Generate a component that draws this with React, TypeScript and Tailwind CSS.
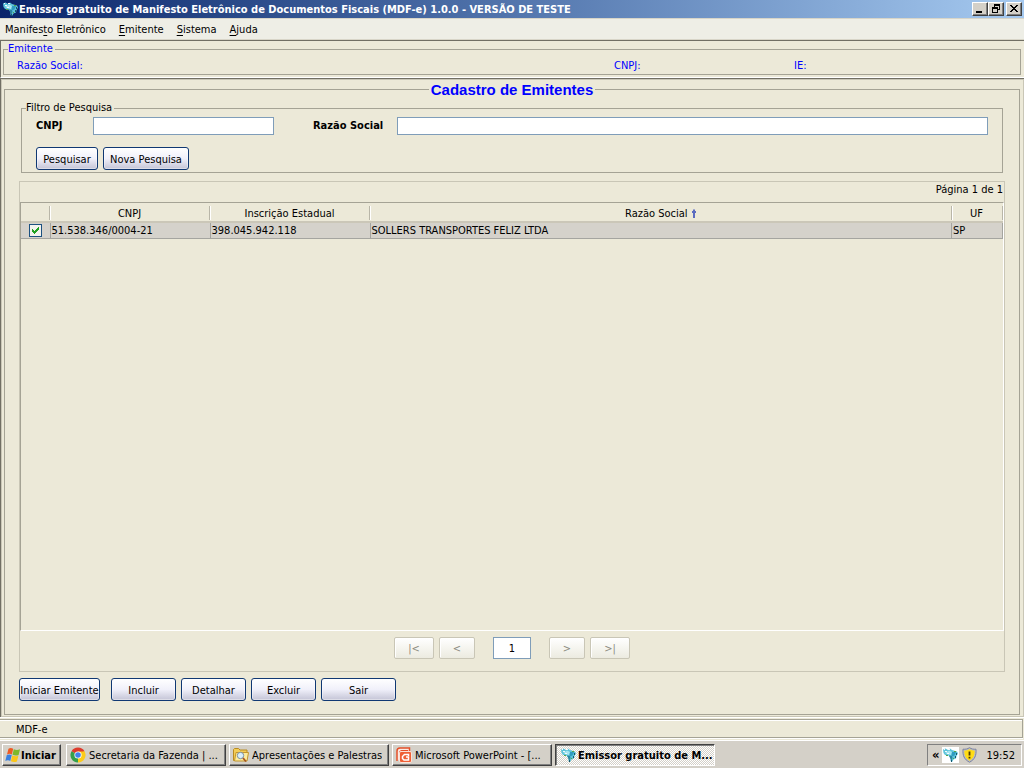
import type { ReactNode } from "react";

function CrystalIcon() {
  return (
    <svg width="17" height="16" viewBox="0 0 17 16" aria-hidden="true">
      <path d="M1 2.500L3.500 1.500 6 3 8 1.500 10 3l5 1.500 1 2-1.500 2.500-.5 2.500-2.500 1-1.500 2.500-1.500-1V11L6.500 8.500 3 8 1.500 6z" fill="#5dc3da" />
      <path d="M3 6l4-2.500 3 1.500-1 3-2.500-.5z" fill="#a6e6f2" />
      <path d="M10 5l4 0-1.500 3.500-3 1z" fill="#2f9cc0" />
      <path d="M7 8.500l3 .5.5 2-1 2.500L8.500 12z" fill="#2a86a0" />
      <g shapeRendering="crispEdges">
        <path d="M2 2h1v1H2zM6 2h2v1H6zM3 4h2v1H3zM5 6h2v1H5z" fill="#f4fbfd" />
        <path d="M14 6h1v2h-1zM13 9h1v2h-1zM9 13h1v2H9z" fill="#14566c" />
        <path d="M12 4h2v1h-2zM4 8h2v1H4zM11 11h1v1h-1z" fill="#58a648" />
      </g>
    </svg>
  );
}

function FlagIcon() {
  return (
    <svg width="16" height="16" viewBox="0 0 16 16" aria-hidden="true">
      <path d="M3.500 1.700C5 .8 6.500.8 8.200 1.700L6.900 7.400C5.300 6.600 3.800 6.600 2 7.400z" fill="#ee5a24" />
      <path d="M8.800 2.200c1.900 1 4 1 6.200.1L13.600 8c-2.100.8-4 .7-6.100-.2z" fill="#7db82b" />
      <path d="M1.800 8.100c1.700-.8 3.300-.8 4.900 0L5.300 13.900c-1.500-.9-3.200-.9-5 0z" fill="#3a80e0" />
      <path d="M7.300 8.600c2 .9 3.900 1 6.100.2l-1.500 5.700c-2.100.8-4 .7-6-.2z" fill="#fbc618" />
    </svg>
  );
}

function ChromeIcon() {
  return (
    <svg width="16" height="16" viewBox="0 0 16 16" aria-hidden="true">
      <path d="M8 8L1.500 4.250A7.500 7.500 0 0 1 14.500 4.250z" fill="#de3b2d" />
      <path d="M8 8l6.500-3.750A7.500 7.500 0 0 1 8 15.500z" fill="#fccb1b" />
      <path d="M8 8V15.500A7.500 7.500 0 0 1 1.500 4.250z" fill="#35a04a" />
      <path d="M8 4.500h6.600L11 9.800 8 15.500z" fill="#fccb1b" />
      <circle cx="8" cy="8" r="3.600" fill="#ffffff" />
      <circle cx="8" cy="8" r="2.800" fill="#4482e8" />
    </svg>
  );
}

function FolderIcon() {
  return (
    <svg width="16" height="16" viewBox="0 0 16 16" aria-hidden="true">
      <path d="M.5 2.500L1.500 1.500h4l1.500 1.500H14v2.500H3.500V13.500H.5z" fill="#f3cd58" stroke="#b98b22" />
      <path d="M1.500 14L3 5.500h12.500l-1.500 8.500z" fill="#fdeb9c" stroke="#c3962c" />
      <circle cx="7.500" cy="8.500" r="3.200" fill="#d9effb" stroke="#7c8fa1" />
      <path d="M10 11l3 3.500" stroke="#a65520" strokeWidth="1.800" />
    </svg>
  );
}

function PowerPointIcon() {
  return (
    <svg width="16" height="16" viewBox="0 0 16 16" aria-hidden="true">
      <path d="M1 14V4C1 2 2 1 4 1h9.500v3" fill="#fbe9e2" stroke="#e4502a" strokeWidth="1.500" />
      <path d="M3.500 14V6c0-2 1-2.500 2.500-2.500H12" fill="none" stroke="#e4502a" />
      <rect x="3.500" y="4.500" width="12" height="11" rx="1.500" fill="#ef6036" stroke="#fbe1d6" />
      <path d="M12.500 9V7.500H8.500L6.500 9.500v2l1.500 1.500h4.500V10H10" fill="none" stroke="#fff" strokeWidth="1.500" />
    </svg>
  );
}

function ShieldIcon() {
  return (
    <svg width="15" height="16" viewBox="0 0 15 16" aria-hidden="true">
      <path d="M7.500.7C9.500 2 11.500 2.400 14 2.200c.5 6.300-1.200 10.300-6.500 13C2.200 12.500.5 8.500 1 2.200 3.500 2.400 5.500 2 7.500.7z" fill="#b9bdc8" stroke="#7d83a0" />
      <path d="M7.500 2.200c1.700.9 3.400 1.200 5.200 1.200.1 4.800-1.200 7.900-5.200 10.300-4-2.400-5.300-5.500-5.200-10.300 1.800 0 3.500-.3 5.200-1.200z" fill="#ffdc14" />
      <path d="M7.500 4.500v4M7.500 9.700v1.800" stroke="#4b3900" strokeWidth="1.800" />
    </svg>
  );
}

const uiFont = "font-['DejaVu_Sans_Condensed','DejaVu_Sans',sans-serif]";

function CaptionButton({ label, children }: { label: string; children: ReactNode }) {
  return (
    <button
      type="button"
      aria-label={label}
      className="flex h-3.5 w-4 items-center justify-center border border-t-white border-r-[#404040] border-b-[#404040] border-l-white bg-[#d4d0c8] shadow-[inset_-1px_-1px_#808080]"
    >
      <svg width="12" height="10" viewBox="0 0 12 10" shapeRendering="crispEdges" aria-hidden="true">
        {children}
      </svg>
    </button>
  );
}

function ActionButton({ children, width }: { children: ReactNode; width: string }) {
  return (
    <button
      type="button"
      className={`${width} h-[23px] rounded-[3px] border border-[#103873] bg-linear-to-b from-white via-[#f0f0fa] to-[#c4c4d6] pt-0.5 text-center whitespace-nowrap shadow-[inset_0_0_0_1px_#ffffff66]`}
    >
      {children}
    </button>
  );
}

function PageButton({ label, width, children }: { label: string; width: string; children: ReactNode }) {
  return (
    <button
      type="button"
      disabled
      aria-label={label}
      className={`${width} h-[22px] rounded-[2px] border border-[#c9c6b6] bg-linear-to-b from-white to-[#ecebe0] pt-0.5 text-[#8c8b80] shadow-[inset_1px_1px_#fff]`}
    >
      {children}
    </button>
  );
}

function MenuItem({ before = "", hot, after }: { before?: string; hot: string; after: string }) {
  return (
    <button type="button" className="whitespace-nowrap">
      {before}
      <span className="underline underline-offset-2">{hot}</span>
      {after}
    </button>
  );
}

function TaskButton({ icon, children }: { icon: ReactNode; children: ReactNode }) {
  return (
    <button
      type="button"
      className="flex h-[22px] w-40 items-center gap-[3px] border border-t-white border-r-[#404040] border-b-[#404040] border-l-white bg-[#d4d0c8] px-[3px] shadow-[inset_-1px_-1px_#808080]"
    >
      <span className="shrink-0">{icon}</span>
      <span className="truncate pt-px">{children}</span>
    </button>
  );
}

const columns = [
  { name: "CNPJ", width: "w-40" },
  { name: "Inscrição Estadual", width: "w-40" },
  { name: "Razão Social", width: "", sorted: true },
  { name: "UF", width: "w-[51px]" },
];

const rows = [["51.538.346/0004-21", "398.045.942.118", "SOLLERS TRANSPORTES FELIZ LTDA", "SP"]];

export default function App() {
  return (
    <div className={`${uiFont} flex min-h-screen flex-col bg-[#ece9d8] text-[11px] leading-[14px] text-black`}>
      <header className="flex h-[18px] items-center bg-linear-to-r from-[#0a246a] to-[#a6caf0] pr-0.5 pl-0.5 text-white">
        <CrystalIcon />
        <h1 className="flex-1 truncate pt-px font-bold">
          Emissor gratuito de Manifesto Eletrônico de Documentos Fiscais (MDF-e) 1.0.0 - VERSÃO DE TESTE
        </h1>
        <div className="flex">
          <CaptionButton label="Minimizar">
            <path d="M2 7h6v2H2z" fill="#000" />
          </CaptionButton>
          <CaptionButton label="Restaurar">
            <path d="M4 0h6v6H8V5h1V2H5v1H4zM2 3h6v6H2zM3 5v3h4V5z" fill="#000" fillRule="evenodd" />
          </CaptionButton>
          <div className="ml-0.5">
            <CaptionButton label="Fechar">
              <path d="M2 1h2v1h1v1h2V2h1V1h2v1H9v1H8v1H7v1h1v1h1v1h1v1H8V7H7V6H5v1H4v1H2V7h1V6h1V5h1V4H4V3H3V2H2z" fill="#000" />
            </CaptionButton>
          </div>
        </div>
      </header>

      <nav className="flex h-[22px] items-center gap-[13px] border-t border-b border-[#d8d5c8] bg-[#eeeee6] px-[5px] pt-px">
        <MenuItem before="Manifes" hot="t" after="o Eletrônico" />
        <MenuItem hot="E" after="mitente" />
        <MenuItem hot="S" after="istema" />
        <MenuItem hot="A" after="juda" />
      </nav>

      <section className="border-t border-b border-l border-[#716f64] border-b-white pt-px pr-[3px] pb-0.5 pl-0.5">
        <fieldset className="border border-[#a5a395] px-1 text-[#0000ff]">
          <legend className="pr-0.5">Emitente</legend>
          <div className="grid grid-cols-[1fr_180px_222px] pt-[3px] pb-px pl-[9px]">
            <span>Razão Social:</span>
            <span>CNPJ:</span>
            <span>IE:</span>
          </div>
        </fieldset>
      </section>

      <main className="flex flex-1 flex-col border-t border-l border-[#716f64]">
        <div className="flex flex-1 flex-col border border-[#c9c6b6] pt-[9px] pr-[3px] pb-px pl-0.5">
          <section className="flex flex-1 flex-col border border-[#a5a395] px-3.5 pb-[13px]">
            <h2 className="mx-auto -mt-[9px] bg-[#ece9d8] px-0.5 font-['Liberation_Sans',sans-serif] text-[15px] leading-[18px] font-bold text-[#0000ff]">
              Cadastro de Emitentes
            </h2>

            <fieldset className="mx-0.5 mt-0.5 border border-[#a5a395] px-1 pb-0.5">
              <legend className="pr-0.5">Filtro de Pesquisa</legend>
              <form className="px-2.5" onSubmit={(event) => event.preventDefault()}>
                <div className="flex items-center pt-0.5 font-bold">
                  <label htmlFor="cnpj" className="w-[57px]">
                    CNPJ
                  </label>
                  <input id="cnpj" className="h-[18px] w-[181px] border border-[#7f9db9] bg-white px-1 font-normal outline-none" />
                  <label htmlFor="razao" className="ml-[39px] w-[84px]">
                    Razão Social
                  </label>
                  <input id="razao" className="h-[18px] min-w-0 flex-1 border border-[#7f9db9] bg-white px-1 font-normal outline-none" />
                </div>
                <div className="mt-3 flex gap-[5px]">
                  <ActionButton width="w-[62px]">Pesquisar</ActionButton>
                  <ActionButton width="w-[86px]">Nova Pesquisa</ActionButton>
                </div>
              </form>
            </fieldset>

            <section className="mt-2 flex flex-1 flex-col border border-[#c9c6b6]">
              <p className="h-5 pt-px pr-px text-right">Página 1 de 1</p>
              <div className="flex-1 border-t border-r border-b border-l border-t-[#a5a395] border-r-white border-b-white border-l-[#a5a395]">
                <table className="w-full table-fixed border-collapse">
                  <thead>
                    <tr className="h-[19px] border-b-2 border-[#cbc7b8]">
                      <th scope="col" aria-label="Selecionar" className="w-[29px] p-0 pt-0.5">
                        <div className="h-3.5 border-r border-[#b9b6a8] shadow-[1px_0_#fff]" />
                      </th>
                      {columns.map((column) => (
                        <th key={column.name} scope="col" className={`${column.width} p-0 pt-0.5 font-normal`}>
                          <div className="flex h-3.5 items-center justify-center gap-1 border-r border-[#b9b6a8] pt-px shadow-[1px_0_#fff]">
                            {column.name}
                            {column.sorted && (
                              <svg width="4" height="9" viewBox="0 0 4 9" shapeRendering="crispEdges" aria-hidden="true">
                                <path d="M1 0h2v1H1z" fill="#a4abd0" />
                                <path d="M1 1h2v1h1v2H3v5H1V4H0V2h1z" fill="#5c6cc0" />
                              </svg>
                            )}
                          </div>
                        </th>
                      ))}
                    </tr>
                  </thead>
                  <tbody>
                    {rows.map((row) => (
                      <tr key={row[0]} className="h-4 border-b border-[#a5a5a0] bg-[#d5d2cb]">
                        <td className="border-r border-[#a5a5a0] p-0">
                          <label className="relative mx-auto block size-[13px]">
                            <input
                              type="checkbox"
                              defaultChecked
                              aria-label="Selecionar emitente"
                              className="peer block size-[13px] appearance-none border border-[#1c5180] bg-[#f3f3ee]"
                            />
                            <svg
                              width="13"
                              height="13"
                              viewBox="0 0 13 13"
                              shapeRendering="crispEdges"
                              aria-hidden="true"
                              className="pointer-events-none absolute inset-0 hidden peer-checked:block"
                            >
                              <path d="M3 5h1v1h1v1h1V6h1V5h1V4h1V3h1v3H9v1H8v1H7v1H6v1H5V9H4V8H3z" fill="#21a121" />
                            </svg>
                          </label>
                        </td>
                        {row.map((cell) => (
                          <td key={cell} className="truncate border-r border-[#a5a5a0] p-0 pt-px pl-px">
                            {cell}
                          </td>
                        ))}
                      </tr>
                    ))}
                  </tbody>
                </table>
              </div>
              <div className="flex h-10 items-center justify-center pb-1.5">
                <PageButton label="Primeira página" width="w-10">|&lt;</PageButton>
                <div className="ml-[5px] flex">
                  <PageButton label="Página anterior" width="w-9">&lt;</PageButton>
                </div>
                <input
                  aria-label="Página"
                  defaultValue="1"
                  className="mx-[18px] h-[22px] w-[38px] border border-[#7f9db9] bg-white text-center outline-none"
                />
                <PageButton label="Próxima página" width="w-9">&gt;</PageButton>
                <div className="ml-[5px] flex">
                  <PageButton label="Última página" width="w-10">&gt;|</PageButton>
                </div>
              </div>
            </section>

            <div className="mt-1.5 flex gap-[5px]">
              <div className="mr-1.5 flex">
                <ActionButton width="w-[81px]">Iniciar Emitente</ActionButton>
              </div>
              <ActionButton width="w-[65px]">Incluir</ActionButton>
              <ActionButton width="w-[65px]">Detalhar</ActionButton>
              <ActionButton width="w-[65px]">Excluir</ActionButton>
              <ActionButton width="w-[75px]">Sair</ActionButton>
            </div>
          </section>
        </div>
      </main>

      <div className="border-t border-white pt-px pr-px">
        <p className="h-[19px] border border-l-0 border-[#a5a395] pt-[3px] pl-4 shadow-[inset_0_1px_#fff,0_1px_#fff]">MDF-e</p>
      </div>

      <footer className="mt-0.5 flex h-7 items-center gap-[3px] border-t border-white bg-[#d4d0c8] pt-px pr-0.5 pl-0.5">
        <button
          type="button"
          className="mr-0.5 flex h-[22px] w-[59px] items-center border border-t-white border-r-[#404040] border-b-[#404040] border-l-white px-0.5 font-bold shadow-[inset_-1px_-1px_#808080]"
        >
          <FlagIcon />
          <span className="pt-px">Iniciar</span>
        </button>
        <TaskButton icon={<ChromeIcon />}>Secretaria da Fazenda | ...</TaskButton>
        <TaskButton icon={<FolderIcon />}>Apresentações e Palestras</TaskButton>
        <TaskButton icon={<PowerPointIcon />}>Microsoft PowerPoint - [...</TaskButton>
        <button
          type="button"
          className="flex h-[22px] w-40 items-center gap-px border border-t-[#404040] border-r-white border-b-white border-l-[#404040] bg-[repeating-conic-gradient(#ffffff_0_25%,#d4d0c8_0_50%)] bg-size-[2px_2px] pl-1 font-bold whitespace-nowrap shadow-[inset_1px_1px_#808080]"
        >
          <span className="shrink-0">
            <CrystalIcon />
          </span>
          <span className="pt-px">Emissor gratuito de M...</span>
        </button>
        <div className="ml-auto flex h-[22px] items-center gap-[3px] border border-t-[#808080] border-r-white border-b-white border-l-[#808080] pr-1.5 pl-1">
          <span className="text-[13px] font-bold">«</span>
          <span className="bg-white">
            <CrystalIcon />
          </span>
          <ShieldIcon />
          <time className="ml-1.5 pt-px">19:52</time>
        </div>
      </footer>
    </div>
  );
}
